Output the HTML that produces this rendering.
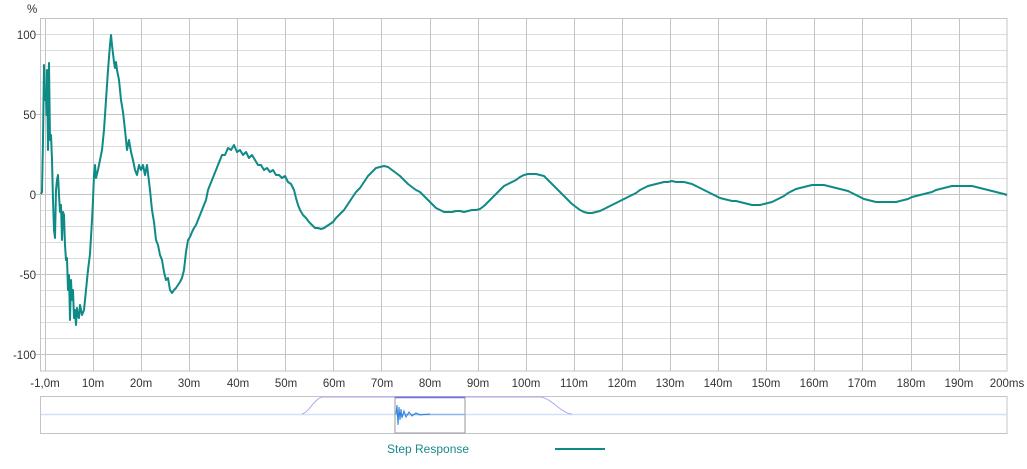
<!DOCTYPE html>
<html><head><meta charset="utf-8"><style>
html,body{margin:0;padding:0;background:#fff;}
body{width:1027px;height:464px;overflow:hidden;font-family:"Liberation Sans",sans-serif;}
</style></head><body>
<svg width="1027" height="464" viewBox="0 0 1027 464" xmlns="http://www.w3.org/2000/svg" font-family="Liberation Sans, sans-serif" font-size="11.5" fill="#333">
<rect width="1027" height="464" fill="#fff"/>
<g stroke="#dcdcdc" stroke-width="1">
<path d="M40 34.5H1007M40 50.5H1007M40 66.5H1007M40 82.5H1007M40 98.5H1007M40 130.5H1007M40 146.5H1007M40 162.5H1007M40 178.5H1007M40 210.5H1007M40 226.5H1007M40 242.5H1007M40 258.5H1007M40 290.5H1007M40 306.5H1007M40 322.5H1007M40 338.5H1007"/>
</g>
<g stroke="#c4c4c4" stroke-width="1">
<path d="M40 114.5H1007M40 194.5H1007M40 274.5H1007M40 354.5H1007"/>
<path d="M45.5 18V371M93.5 18V371M141.5 18V371M189.5 18V371M237.5 18V371M285.5 18V371M333.5 18V371M381.5 18V371M430.5 18V371M478.5 18V371M526.5 18V371M574.5 18V371M622.5 18V371M670.5 18V371M718.5 18V371M766.5 18V371M814.5 18V371M862.5 18V371M911.5 18V371M959.5 18V371"/>
<rect x="40.5" y="18.5" width="966.5" height="352.5" fill="none"/>
<path d="M35 34.5H40M35 114.5H40M35 194.5H40M35 274.5H40M35 354.5H40"/>
</g>
<g text-anchor="end">
<text x="36" y="39">100</text><text x="36" y="119">50</text><text x="36" y="199">0</text><text x="36" y="279">-50</text><text x="36" y="359">-100</text>
</g>
<text x="27" y="13">%</text>
<g text-anchor="middle">
<text x="45" y="387">-1,0m</text><text x="93" y="387">10m</text><text x="141" y="387">20m</text><text x="189" y="387">30m</text><text x="238" y="387">40m</text><text x="286" y="387">50m</text><text x="334" y="387">60m</text><text x="382" y="387">70m</text><text x="430" y="387">80m</text><text x="478" y="387">90m</text><text x="526" y="387">100m</text><text x="574" y="387">110m</text><text x="622" y="387">120m</text><text x="670" y="387">130m</text><text x="718" y="387">140m</text><text x="766" y="387">150m</text><text x="814" y="387">160m</text><text x="862" y="387">170m</text><text x="911" y="387">180m</text><text x="959" y="387">190m</text><text x="1007" y="387">200ms</text>
</g>
<polyline fill="none" stroke="#0e8a87" stroke-width="2" stroke-linejoin="round" points="41,194 42,192 43,140 44,65 45,100 46,90 46.5,115 47,70 48,150 49,63 50,140 51,135 52,160 53,200 54,230 55,238 56,190 57,180 58,175 59,195 60,212 61,205 62,240 63,212 64,215 65,245 66,260 67,258 68,290 69,275 70,320 71,280 72,300 73,290 74,318 75,310 76,325 77,308 78,316 79,318 80,305 82,315 84,310 86,290 88,270 90,254 92,220 93,200 94,175 95,165 96,178 98,170 100,160 102,150 104,130 106,100 108,70 110,45 111,35 112,45 114,62 115,68 116,62 117,70 119,80 121,100 123,112 125,130 127,150 129,140 131,152 133,160 135,170 137,175 139,165 141,170 143,165 145,175 147,165 150,190 152,210 154,222 156,240 158,245 160,255 162,260 164,272 166,280 168,278 170,290 172,293 174,290 176,288 178,285 180,282 182,278 184,270 186,252 188,240 190,237 192,232 194,228 196,225 198,220 200,215 202,210 204,205 206,200 208,190 210,185 212,180 214,175 216,170 218,165 220,160 222,155 225,155 228,148 231,150 234,145 237,152 240,150 243,155 246,152 249,158 252,155 255,160 258,165 261,165 264,170 267,168 270,172 273,170 276,175 279,175 282,178 285,176 288,182 291,184 294,190 296,198 298,205 300,210 303,215 306,218 309,222 312,225 315,228 318,228 321,229 324,228 327,226 330,224 333,222 336,218 340,214 344,210 348,204 352,198 356,192 360,188 364,182 368,176 372,172 376,168 380,167 384,166 388,167 392,170 396,173 400,176 404,180 408,184 412,187 416,190 420,192 424,196 428,200 432,204 436,208 440,210 444,212 448,212 452,212 456,211 460,211 464,212 468,211 472,210 476,210 480,209 484,206 488,202 492,198 496,194 500,190 504,186 508,184 512,182 516,180 520,177 524,175 528,174 532,174 536,174 540,175 544,176 548,180 552,184 556,188 560,192 564,196 568,200 572,204 576,207 580,210 584,212 588,213 592,213 596,212 600,211 604,209 608,207 612,205 616,203 620,201 624,199 628,197 632,195 636,193 640,190 644,188 648,186 652,185 656,184 660,183 664,182 668,182 672,181 676,182 680,182 684,182 688,183 692,184 696,186 700,188 704,190 708,192 712,194 716,196 720,198 724,199 728,200 732,201 736,201 740,202 744,203 748,204 752,205 756,205 760,205 764,204 768,203 772,202 776,200 780,198 784,196 788,193 792,191 796,189 800,188 804,187 808,186 812,185 816,185 820,185 824,185 828,186 832,187 836,188 840,189 844,190 848,191 852,193 856,195 860,197 864,199 868,200 872,201 876,202 880,202 884,202 888,202 892,202 896,202 900,201 904,200 908,199 912,197 916,196 920,195 924,194 928,193 932,192 936,190 940,189 944,188 948,187 952,186 956,186 960,186 964,186 968,186 972,186 976,187 980,188 984,189 988,190 992,191 996,192 1000,193 1004,194 1007,195"/>
<rect x="40.5" y="396.5" width="966.5" height="37" fill="#fff" stroke="#c4c4c4"/>
<line x1="41" y1="414.5" x2="1006" y2="414.5" stroke="#cfe2f8" stroke-width="1.5"/>
<path d="M302 414 C310 412 314 398 323 397 L540 397 C552 398 560 413 572 414" fill="none" stroke="#a9a9f0" stroke-width="1"/>
<rect x="395" y="397" width="70" height="36" fill="#fff" stroke="#9a9a9a"/>
<line x1="395" y1="397.5" x2="465" y2="397.5" stroke="#7070e8" stroke-width="1.5"/>
<line x1="395" y1="414.5" x2="465" y2="414.5" stroke="#8ab8f0" stroke-width="1.5"/>
<path d="M396 414 L397 405 L398 425 L399 407 L400 420 L401 409 L402 418 L404 411 L406 417 L409 412 L412 416 L416 413 L420 415 L430 414" fill="none" stroke="#2a7fe0" stroke-width="1"/>
<text x="387" y="453" fill="#1a8a8a" font-size="12">Step Response</text>
<line x1="555" y1="449" x2="605" y2="449" stroke="#0e8a87" stroke-width="2"/>
</svg>
</body></html>
